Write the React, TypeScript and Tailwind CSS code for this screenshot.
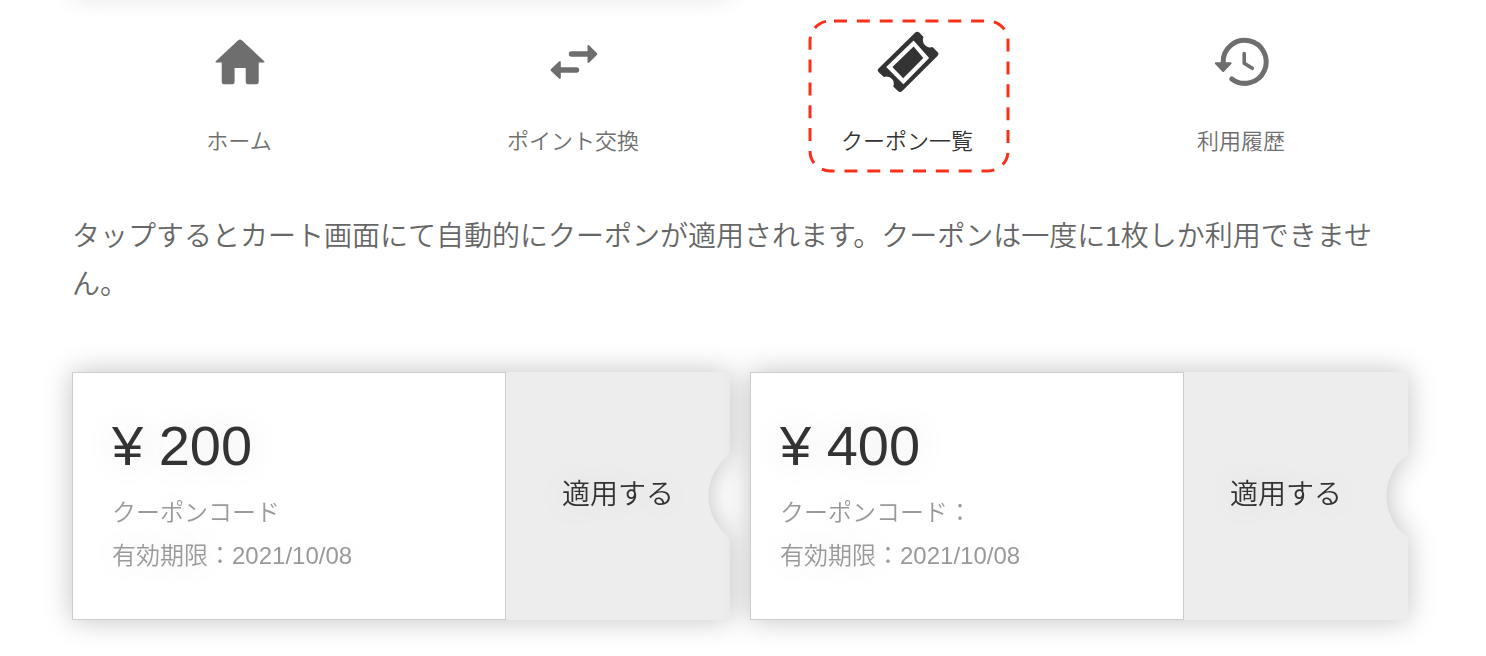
import type { ReactNode } from 'react';

function HomeIcon() {
  return (
    <svg viewBox="0 0 64 64" className="size-16" fill="currentColor" aria-hidden="true">
      <path d="M33 9.500q1 0 1.800.8L57 31q1.200 1.500-.6 1.500H51.700V52q0 2.300-2.300 2.300H41q-2.300 0-2.300-2.300V38H27.600V52q0 2.300-2.300 2.300H17q-2.300 0-2.300-2.300V32.500H9.600q-1.800 0-.6-1.500L31.200 10.300q.8-.8 1.800-.8Z" />
    </svg>
  );
}

function SwapIcon() {
  return (
    <svg viewBox="0 0 64 64" className="size-16" fill="currentColor" aria-hidden="true">
      <path d="M30.500 21.300H46.500V16.500q0-2.300 1.800-1L55.800 22.900q1 1 0 2L48.300 32.500q-1.800 1.300-1.800-1V26.700H30.500a2.700 2.700 0 0 1 0-5.400Z" />
      <path d="M35.500 37.300H19.800V32.500q0-2.300-1.800-1L10 38.900q-1 1 0 2L18 48.500q1.800 1.300 1.800-1V42.700H35.500a2.700 2.700 0 0 0 0-5.400Z" />
    </svg>
  );
}

function TicketIcon() {
  return (
    <svg viewBox="0 0 64 64" className="size-16" fill="currentColor" aria-hidden="true">
      <path
        fillRule="evenodd"
        d="M40.300 2.600q2-1.800 4 0L48.500 7Q47 10.500 49 14q3.500 4.500 8.500 3L62.700 22.300q1.500 1.700 0 3.400L27 61.200q-2 1.600-3.800 0L18.200 56.500Q19.700 52.500 17.500 49.500 14 45.500 8.800 47L3.500 42q-1.600-1.800 0-3.600ZM38.600 10.400L11.200 36.900 28.400 54.200 54.100 28ZM38.600 16.500L48.300 28 28.200 48.300 17.400 36.900Z"
      />
    </svg>
  );
}

function HistoryIcon() {
  return (
    <svg viewBox="0 0 64 64" className="size-16" fill="none" stroke="currentColor" strokeLinecap="round" strokeLinejoin="round" aria-hidden="true">
      <path d="M14.200 34V32A21.500 21.500 0 1 1 22.800 49" strokeWidth="5" />
      <path d="M35.200 23.500V33.200L43.300 38.300" strokeWidth="3.600" />
      <path d="M6.800 33.300H21.600L14.200 41Z" fill="currentColor" strokeWidth="2" />
    </svg>
  );
}

function HighlightFrame() {
  return (
    <svg className="pointer-events-none absolute -top-[11px] left-1/2 h-[154px] w-[202px] -translate-x-[99px]" fill="none" aria-hidden="true">
      <rect x="2" y="2" width="198" height="150" rx="20" stroke="#fb301b" strokeWidth="3" strokeDasharray="13 9.850" strokeDashoffset="-4" />
    </svg>
  );
}

function NavItem({ label, icon, active = false }: { label: string; icon: ReactNode; active?: boolean }) {
  return (
    <a
      href="#"
      aria-current={active ? 'page' : undefined}
      className={`relative flex flex-col items-center gap-8 text-[22px] leading-8 ${active ? 'text-[#333]' : 'text-[#6e6e6e]'}`}
    >
      {icon}
      <span>{label}</span>
      {active && <HighlightFrame />}
    </a>
  );
}

type CouponProps = { amount: number; code: string; expires: string; inset: string; actionInset: string };

function Coupon({ amount, code, expires, inset, actionInset }: CouponProps) {
  return (
    <article className="flex h-[248px] min-w-0 flex-1 drop-shadow-[0_0_14px_rgba(0,0,0,0.24)] [text-shadow:0_0_36px_rgba(0,0,0,0.12)]">
      <div className={`flex min-w-0 flex-1 flex-col border border-[#ccc] bg-white pt-[37px] ${inset}`}>
        <h2 className="text-[56px] leading-[72px] text-[#333]">¥ {amount}</h2>
        <p className="mt-[9px] text-2xl leading-[43px] text-[#999]">{code}</p>
        <p className="text-2xl leading-[43px] text-[#999]">有効期限：{expires}</p>
      </div>
      <button
        type="button"
        className={`w-[224px] shrink-0 cursor-pointer bg-[#ededed] pb-0.5 text-center text-[28px] text-[#333] [mask-image:radial-gradient(circle_at_calc(100%+30px)_50%,transparent_51px,black_52px)] [text-shadow:inherit] ${actionInset}`}
      >
        適用する
      </button>
    </article>
  );
}

export default function App() {
  return (
    <main className="min-h-screen overflow-hidden bg-white pr-[78px] pb-9 pl-[72px] font-['Liberation_Sans','Noto_Sans_CJK_JP',sans-serif] font-[350]">
      <div className="-mt-7 h-[22px] w-[calc(50%-10px)] bg-white shadow-[0_0_28px_rgba(0,0,0,0.14)]" />

      <nav className="mt-9 grid grid-cols-4">
        <NavItem label="ホーム" icon={<HomeIcon />} />
        <NavItem label="ポイント交換" icon={<SwapIcon />} />
        <NavItem label="クーポン一覧" icon={<TicketIcon />} active />
        <NavItem label="利用履歴" icon={<HistoryIcon />} />
      </nav>

      <p className="mt-[55px] text-[28px] leading-[48px] text-[#666]">
        タップするとカート画面にて自動的にクーポンが適用されます。クーポンは一度に1枚しか利用できません。
      </p>

      <section className="mt-[63px] flex gap-5">
        <Coupon amount={200} code="クーポンコード" expires="2021/10/08" inset="pl-[39px]" actionInset="" />
        <Coupon amount={400} code="クーポンコード：" expires="2021/10/08" inset="pl-[29px]" actionInset="pr-5" />
      </section>
    </main>
  );
}
